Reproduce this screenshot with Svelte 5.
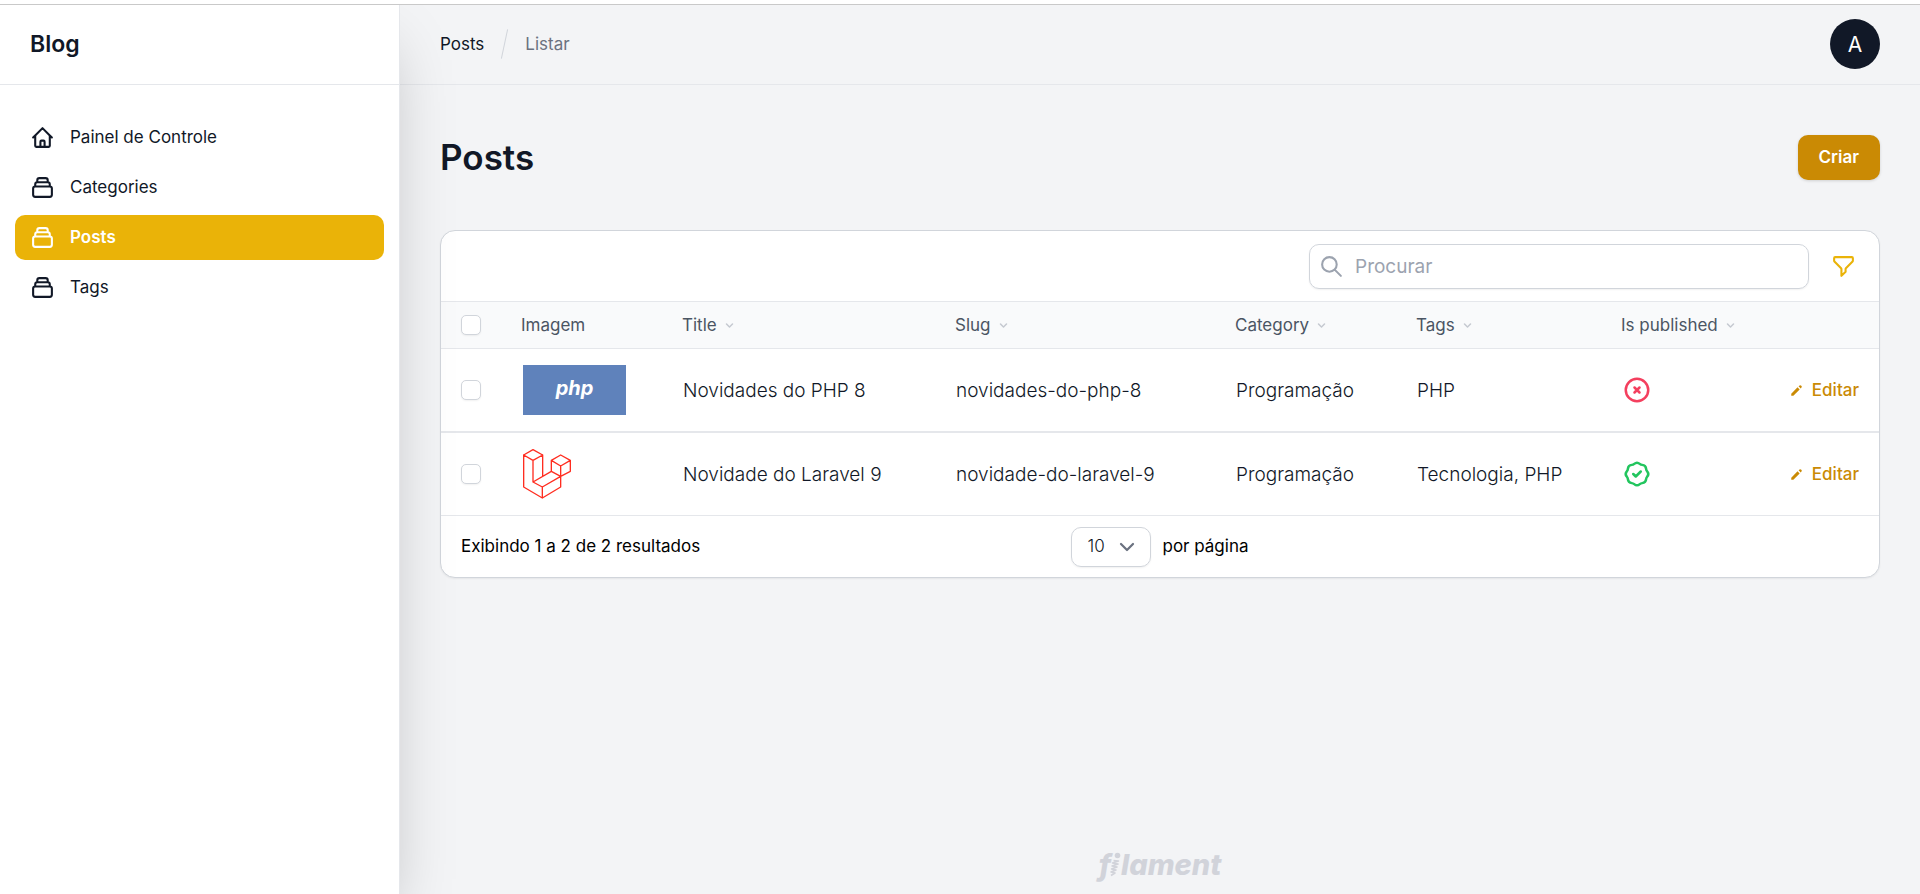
<script>
  const icons = {
    home: 'M3 12l2-2m0 0l7-7 7 7M5 10v10a1 1 0 001 1h3m10-11l2 2m-2-2v10a1 1 0 01-1 1h-3m-6 0a1 1 0 001-1v-4a1 1 0 011-1h2a1 1 0 011 1v4a1 1 0 001 1m-6 0h6',
    collection: 'M19 11H5m14 0a2 2 0 012 2v6a2 2 0 01-2 2H5a2 2 0 01-2-2v-6a2 2 0 012-2m14 0V9a2 2 0 00-2-2M5 11V9a2 2 0 012-2m0 0V5a2 2 0 012-2h6a2 2 0 012 2v2M7 7h10',
    search: 'M21 21l-6-6m2-5a7 7 0 11-14 0 7 7 0 0114 0z',
    filter: 'M3 4a1 1 0 011-1h16a1 1 0 011 1v2.586a1 1 0 01-.293.707l-6.414 6.414a1 1 0 00-.293.707V17l-4 4v-6.586a1 1 0 00-.293-.707L3.293 7.293A1 1 0 013 6.586V4z',
    no: 'M10 14l2-2m0 0l2-2m-2 2l-2-2m2 2l2 2m7-2a9 9 0 11-18 0 9 9 0 0118 0z',
    yes: 'M9 12l2 2 4-4M7.835 4.697a3.42 3.42 0 001.946-.806 3.42 3.42 0 014.438 0 3.42 3.42 0 001.946.806 3.42 3.42 0 013.138 3.138 3.42 3.42 0 00.806 1.946 3.42 3.42 0 010 4.438 3.42 3.42 0 00-.806 1.946 3.42 3.42 0 01-3.138 3.138 3.42 3.42 0 00-1.946.806 3.42 3.42 0 01-4.438 0 3.42 3.42 0 00-1.946-.806 3.42 3.42 0 01-3.138-3.138 3.42 3.42 0 00-.806-1.946 3.42 3.42 0 010-4.438 3.42 3.42 0 00.806-1.946 3.42 3.42 0 013.138-3.138z'
  };

  const nav = [
    { label: 'Painel de Controle', icon: 'home' },
    { label: 'Categories', icon: 'collection' },
    { label: 'Posts', icon: 'collection', active: true },
    { label: 'Tags', icon: 'collection' }
  ];

  const columns = [
    { label: 'Imagem', sortable: false },
    { label: 'Title', sortable: true },
    { label: 'Slug', sortable: true },
    { label: 'Category', sortable: true },
    { label: 'Tags', sortable: true },
    { label: 'Is published', sortable: true }
  ];

  const posts = [
    { image: 'php', title: 'Novidades do PHP 8', slug: 'novidades-do-php-8', category: 'Programação', tags: 'PHP', published: false },
    { image: 'laravel', title: 'Novidade do Laravel 9', slug: 'novidade-do-laravel-9', category: 'Programação', tags: 'Tecnologia, PHP', published: true }
  ];

  let selected = $state([false, false]);
  let query = $state('');

  function toggleAll(event) {
    const checked = event.currentTarget.checked;
    selected = selected.map(() => checked);
  }
</script>

{#snippet outline(name, cls)}
  <svg class={cls} viewBox="0 0 24 24" fill="none" stroke="currentColor" stroke-width="2" stroke-linecap="round" stroke-linejoin="round" aria-hidden="true">
    <path d={icons[name]} />
  </svg>
{/snippet}

<div class="app">
  <aside class="sidebar">
    <div class="brand"><a href="#inicio">Blog</a></div>
    <nav>
      {#each nav as item}
        <a href="#{item.label}" class:active={item.active}>
          {@render outline(item.icon, 'icon')}
          <span>{item.label}</span>
        </a>
      {/each}
    </nav>
  </aside>

  <div class="page">
    <header class="topbar">
      <div class="crumbs">
        <a href="#posts">Posts</a>
        <span class="slash"></span>
        <span class="current">Listar</span>
      </div>
      <button class="avatar" type="button">A</button>
    </header>

    <main>
      <div class="heading">
        <h1>Posts</h1>
        <button class="create" type="button">Criar</button>
      </div>

      <section class="card">
        <div class="toolbar">
          <label class="search">
            {@render outline('search', 'icon')}
            <input type="search" placeholder="Procurar" aria-label="Procurar" bind:value={query} />
          </label>
          <button class="filter" type="button" aria-label="Filtrar">
            {@render outline('filter', 'icon')}
          </button>
        </div>

        <table>
          <colgroup>
            <col class="c-check" /><col class="c-image" /><col class="c-title" /><col class="c-slug" />
            <col class="c-category" /><col class="c-tags" /><col class="c-published" /><col class="c-actions" />
          </colgroup>
          <thead>
            <tr>
              <th><input type="checkbox" aria-label="Selecionar todos" onchange={toggleAll} /></th>
              {#each columns as column}
                <th>
                  {#if column.sortable}
                    <button class="sort" type="button">
                      {column.label}
                      <svg viewBox="0 0 20 20" fill="currentColor" aria-hidden="true">
                        <path d="M5.293 7.293a1 1 0 011.414 0L10 10.586l3.293-3.293a1 1 0 111.414 1.414l-4 4a1 1 0 01-1.414 0l-4-4a1 1 0 010-1.414z" />
                      </svg>
                    </button>
                  {:else}
                    {column.label}
                  {/if}
                </th>
              {/each}
              <th></th>
            </tr>
          </thead>
          <tbody>
            {#each posts as post, i}
              <tr>
                <td class="check"><input type="checkbox" aria-label={post.title} bind:checked={selected[i]} /></td>
                <td class="image">
                  {#if post.image === 'php'}
                    <div class="php">php</div>
                  {:else}
                    <svg class="laravel" viewBox="249 296 144 150" fill="none" stroke="#ff2d20" stroke-width="4" stroke-linejoin="round" stroke-linecap="round" aria-hidden="true">
                      <path d="M279 298L308 314L279 330L251 314ZM251 314V410L307 443L362 410V347M279 330V395L307 410V443M307 410L362 378M308 314V378M279 395L334 363M362 314L391 330L362 347L334 330ZM334 330V363L362 378L391 363V330" />
                    </svg>
                  {/if}
                </td>
                <td>{post.title}</td>
                <td>{post.slug}</td>
                <td>{post.category}</td>
                <td>{post.tags}</td>
                <td class="status" class:yes={post.published}>
                  {@render outline(post.published ? 'yes' : 'no', 'status-icon')}
                </td>
                <td class="actions">
                  <a href="#editar">
                    <svg viewBox="0 0 20 20" fill="currentColor" aria-hidden="true">
                      <path d="M13.586 3.586a2 2 0 112.828 2.828l-.793.793-2.828-2.828.793-.793zM11.379 5.793L3 14.172V17h2.828l8.38-8.379-2.83-2.828z" />
                    </svg>
                    Editar
                  </a>
                </td>
              </tr>
            {/each}
          </tbody>
        </table>

        <footer class="pager">
          <span>Exibindo 1 a 2 de 2 resultados</span>
          <label class="per-page">
            <span class="select">
              <select>
                <option>10</option>
                <option>25</option>
                <option>50</option>
              </select>
              <svg viewBox="0 0 20 20" fill="none" stroke="currentColor" stroke-width="1.5" stroke-linecap="round" stroke-linejoin="round" aria-hidden="true">
                <path d="M6 8l4 4 4-4" />
              </svg>
            </span>
            por página
          </label>
        </footer>
      </section>
    </main>

    <footer class="logo">
      <span>f</span>
      <svg viewBox="0 0 12 26" fill="none" stroke="currentColor" aria-hidden="true">
        <circle cx="8.500" cy="4.500" r="2.800" fill="currentColor" stroke="none" />
        <path d="M4.500 9.500L9.500 10L3.500 12L9 13L3 15L8 16L2.500 18L7 19L2 21L6 22L2 24.500" stroke-width="1.600" stroke-linejoin="round" />
      </svg>
      <span>lament</span>
    </footer>
  </div>
</div>

<style>
  :global(body) {
    margin: 0;
    background: #f3f4f6;
  }

  .app {
    box-sizing: border-box;
    display: flex;
    min-height: 100vh;
    padding-top: 4px;
    background: linear-gradient(#fff 4px, #f3f4f6 4px);
    font-family: Inter, 'Noto Sans', sans-serif;
    font-size: 17px;
    line-height: 25px;
    color: #111827;
  }

  .app::before {
    content: '';
    position: absolute;
    z-index: 3;
    top: 4px;
    left: 0;
    right: 0;
    height: 1px;
    background: #c9c9c9;
  }

  *,
  *::before {
    box-sizing: border-box;
  }

  a {
    color: inherit;
    text-decoration: none;
  }

  button,
  input,
  select {
    margin: 0;
    padding: 0;
    border: 0;
    background: none;
    font: inherit;
    color: inherit;
  }

  button {
    cursor: pointer;
  }

  svg {
    display: block;
    flex: none;
  }

  .icon {
    width: 25px;
    height: 25px;
  }

  .sidebar {
    position: relative;
    z-index: 2;
    flex: none;
    width: 400px;
    border-right: 1px solid #e5e7eb;
    background: #fff;
    box-shadow: 0 31px 62px -15px rgba(0, 0, 0, 0.25);
    clip-path: inset(0 -100px 0 0);
  }

  .brand {
    display: flex;
    align-items: center;
    height: 81px;
    padding: 0 30px;
    border-bottom: 1px solid #e5e7eb;
    font-size: 23px;
    font-weight: 600;
  }

  nav {
    display: grid;
    gap: 5px;
    padding: 30px 15px;
  }

  nav a {
    display: flex;
    align-items: center;
    gap: 15px;
    height: 45px;
    padding: 0 15px;
    border-radius: 10px;
    font-weight: 400;
  }

  nav a.active {
    background: #eab308;
    color: #fff;
    font-weight: 600;
  }

  .page {
    flex: 1;
    display: flex;
    flex-direction: column;
    min-width: 0;
  }

  .topbar {
    display: flex;
    align-items: center;
    justify-content: space-between;
    height: 81px;
    padding: 0 40px;
    border-bottom: 1px solid #e5e7eb;
  }

  .crumbs {
    display: flex;
    align-items: center;
    gap: 20px;
  }

  .slash {
    width: 1px;
    height: 30px;
    background: #d1d5db;
    transform: rotate(12deg);
  }

  .current {
    color: #6b7280;
  }

  .avatar {
    width: 50px;
    height: 50px;
    border-radius: 50%;
    background: #111827;
    color: #fff;
    font-size: 21px;
  }

  main {
    padding: 50px 40px;
  }

  .heading {
    display: flex;
    align-items: center;
    justify-content: space-between;
    margin-bottom: 50px;
  }

  h1 {
    margin: 0;
    font-size: 35px;
    line-height: 45px;
    font-weight: 600;
  }

  .create {
    height: 45px;
    padding: 0 21px;
    border-radius: 10px;
    background: #ca8a04;
    color: #fff;
    font-weight: 600;
    box-shadow: 0 1px 3px rgba(0, 0, 0, 0.15);
  }

  .card {
    border: 1px solid #d1d5db;
    border-radius: 15px;
    background: #fff;
    box-shadow: 0 1px 2px rgba(0, 0, 0, 0.06);
    overflow: hidden;
  }

  .toolbar {
    display: flex;
    align-items: center;
    justify-content: flex-end;
    gap: 10px;
    height: 70px;
    padding: 0 12px;
  }

  .search {
    display: flex;
    align-items: center;
    gap: 11px;
    width: 500px;
    height: 45px;
    padding: 0 9px;
    border: 1px solid #d1d5db;
    border-radius: 10px;
    box-shadow: 0 1px 2px rgba(0, 0, 0, 0.06);
    color: #9ca3af;
  }

  .search input {
    flex: 1;
    min-width: 0;
    outline: none;
    font-size: 19px;
    color: #111827;
  }

  .search input::placeholder {
    color: #9ca3af;
    opacity: 1;
  }

  .filter {
    display: grid;
    place-items: center;
    width: 48px;
    height: 48px;
    color: #eab308;
  }

  table {
    width: 100%;
    border-collapse: separate;
    border-spacing: 0;
    table-layout: fixed;
  }

  .c-check { width: 60px; }
  .c-image { width: 161px; }
  .c-title { width: 273px; }
  .c-slug { width: 280px; }
  .c-category { width: 181px; }
  .c-tags { width: 205px; }
  .c-published { width: 158px; }
  .c-actions { width: 120px; }

  th {
    height: 48px;
    padding: 0 0 0 20px;
    border-top: 1px solid #e5e7eb;
    border-bottom: 1px solid #e5e7eb;
    background: #f9fafb;
    color: #4b5563;
    font-weight: 400;
    text-align: left;
    white-space: nowrap;
  }

  .sort {
    display: flex;
    align-items: center;
    gap: 5px;
  }

  .sort svg {
    width: 15px;
    height: 15px;
    color: #c5c9d0;
  }

  td {
    height: 84px;
    padding: 0 0 0 21px;
    border-bottom: 2px solid #e5e7eb;
    font-size: 19px;
    font-weight: 300;
    white-space: nowrap;
  }

  tr:last-child td {
    height: 83px;
    border-bottom-width: 1px;
  }

  td.check {
    padding-left: 20px;
  }

  td.image {
    padding-left: 22px;
  }

  input[type='checkbox'] {
    display: block;
    appearance: none;
    width: 20px;
    height: 20px;
    border: 1px solid #d1d5db;
    border-radius: 5px;
    background: #fff;
    box-shadow: 0 1px 2px rgba(0, 0, 0, 0.06);
  }

  input[type='checkbox']:checked {
    border-color: #ca8a04;
    background: #ca8a04;
  }

  .php {
    display: grid;
    justify-items: center;
    width: 103px;
    height: 50px;
    background: #5f82bb;
    color: #fff;
    font: italic 700 20px/46px Inter, 'Noto Sans', sans-serif;
  }

  .laravel {
    width: 48px;
    height: 50px;
  }

  .status {
    color: #f43f5e;
  }

  .status.yes {
    color: #22c55e;
  }

  .status-icon {
    width: 30px;
    height: 30px;
  }

  td.actions {
    padding: 0 20px 0 0;
  }

  .actions a {
    display: flex;
    align-items: center;
    justify-content: flex-end;
    gap: 8px;
    color: #ca8a04;
    font-size: 17px;
    font-weight: 500;
  }

  .actions svg {
    width: 15px;
    height: 15px;
  }

  .pager {
    display: grid;
    grid-template-columns: 1fr auto 1fr;
    align-items: center;
    height: 61px;
    padding: 0 20px;
    color: #000;
  }

  .per-page {
    display: flex;
    align-items: center;
    gap: 11px;
  }

  .select {
    display: grid;
    align-items: center;
    width: 80px;
  }

  .select select,
  .select svg {
    grid-area: 1 / 1;
  }

  select {
    appearance: none;
    width: 100%;
    height: 40px;
    padding-left: 15px;
    border: 1px solid #d1d5db;
    border-radius: 10px;
    box-shadow: 0 1px 2px rgba(0, 0, 0, 0.06);
    font-weight: 300;
    color: #111827;
  }

  .select svg {
    justify-self: end;
    width: 30px;
    height: 30px;
    margin-right: 9px;
    color: #6b7280;
    pointer-events: none;
  }

  .logo {
    display: flex;
    align-items: flex-end;
    justify-content: center;
    margin-top: auto;
    padding-bottom: 14px;
    color: #d1d3da;
    font: italic 800 29px/30px Inter, 'Noto Sans', sans-serif;
  }

  .logo svg {
    width: 12px;
    height: 26px;
    margin-bottom: 3px;
    margin-left: -2px;
  }
</style>
